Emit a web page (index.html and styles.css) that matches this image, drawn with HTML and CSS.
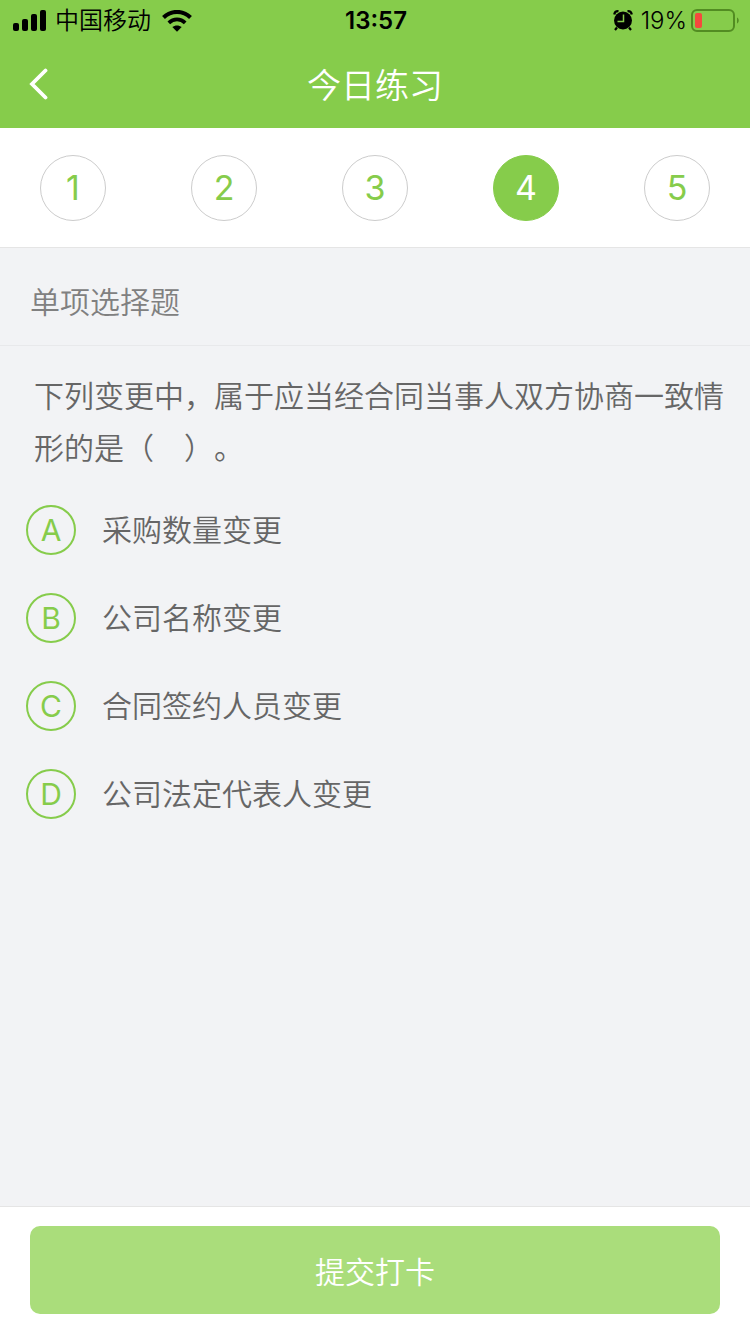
FILE: index.html
```
<!DOCTYPE html>
<html lang="zh-CN">
<head>
    <meta charset="UTF-8">
    <meta name="viewport" content="width=device-width, initial-scale=1.0">
    <title>今日练习</title>
    <link rel="stylesheet" href="styles.css">
</head>
<body>
    <header class="header">
        <div class="status-bar">
            <div class="status-left">
                <svg width="34" height="22" viewBox="0 0 34 22" aria-hidden="true">
                    <rect x="0" y="13" width="6" height="8" rx="2"/>
                    <rect x="9" y="9" width="6" height="12" rx="2"/>
                    <rect x="18" y="4" width="6" height="17" rx="2"/>
                    <rect x="27" y="0" width="6" height="21" rx="2"/>
                </svg>
                <span class="carrier">中国移动</span>
                <svg width="30" height="22" viewBox="0 0 30 22" aria-hidden="true">
                    <path d="M1.5 7.5C9 0 21 0 28.500 7.500" fill="none" stroke="#000" stroke-width="4"/>
                    <path d="M6.800 12.800C11.500 8.300 18.500 8.300 23.200 12.800" fill="none" stroke="#000" stroke-width="3.800"/>
                    <path d="M10.300 17.100C13 14.800 17 14.800 19.700 17.100L15 21.800Z"/>
                </svg>
            </div>
            <span class="clock">13:57</span>
            <div class="status-right">
                <svg width="20" height="22" viewBox="0 0 20 22" aria-hidden="true">
                    <circle cx="10" cy="10.500" r="9"/>
                    <path d="M1.200 4.500A4 4 0 0 1 5.500 1.200M18.800 4.500A4 4 0 0 0 14.500 1.200M4 17.500L2 20M16 17.500L18 20" fill="none" stroke="#000" stroke-width="2.200"/>
                    <path d="M10.500 4.500V11.500H4.500" fill="none" stroke="#86cc4b" stroke-width="1.500"/>
                </svg>
                <span class="percent">19%</span>
                <svg width="48" height="24" viewBox="0 0 48 24" aria-hidden="true">
                    <rect x="1" y="1" width="42" height="21" rx="5" fill="none" stroke="#528c22" stroke-width="2"/>
                    <rect x="4" y="4" width="7" height="15" rx="2" fill="#f5493d"/>
                    <path d="M46 8.500C48.300 9.500 48.300 13.500 46 14.500Z" fill="#528c22"/>
                </svg>
            </div>
        </div>
        <div class="title-bar">
            <button class="back-button" type="button" aria-label="返回">
                <svg width="20" height="32" viewBox="0 0 20 32" aria-hidden="true">
                    <path d="M16.500 2.500L3 16L16.500 29.500" fill="none" stroke="#fff" stroke-width="3.800" stroke-linecap="round"/>
                </svg>
            </button>
            <h1>今日练习</h1>
        </div>
    </header>

    <nav class="steps" aria-label="题目">
        <button class="step" type="button">1</button>
        <button class="step" type="button">2</button>
        <button class="step" type="button">3</button>
        <button class="step active" type="button" aria-current="step">4</button>
        <button class="step" type="button">5</button>
    </nav>

    <main class="content">
        <h2>单项选择题</h2>
        <form id="quiz">
            <p class="question" id="question">下列变更中，属于应当经合同当事人双方协商一致情形的是（　）。</p>
            <div class="options" role="radiogroup" aria-labelledby="question">
                <label class="option">
                    <span class="mark"><input type="radio" name="answer" value="A"><span>A</span></span>
                    采购数量变更
                </label>
                <label class="option">
                    <span class="mark"><input type="radio" name="answer" value="B"><span>B</span></span>
                    公司名称变更
                </label>
                <label class="option">
                    <span class="mark"><input type="radio" name="answer" value="C"><span>C</span></span>
                    合同签约人员变更
                </label>
                <label class="option">
                    <span class="mark"><input type="radio" name="answer" value="D"><span>D</span></span>
                    公司法定代表人变更
                </label>
            </div>
        </form>
    </main>

    <footer class="footer">
        <button class="submit-button" type="submit" form="quiz">提交打卡</button>
    </footer>
</body>
</html>
```

FILE: styles.css
```
* {
    margin: 0;
    padding: 0;
    box-sizing: border-box;
}

body {
    font-family: Inter, "Noto Sans CJK SC", sans-serif;
    font-size: 30px;
    font-weight: 350;
    text-spacing-trim: space-all;
    min-height: 100vh;
    display: flex;
    flex-direction: column;
    background: #f2f3f5;
    color: #666;
}

button {
    font-family: inherit;
    font-weight: inherit;
    border: none;
    background: none;
    cursor: pointer;
}

svg {
    display: block;
    flex-shrink: 0;
}

/* Header */
.header {
    background: #86cc4b;
}

.status-bar {
    display: grid;
    grid-template-columns: 1fr auto 1fr;
    align-items: center;
    height: 40px;
    padding: 0 11px 0 13px;
    color: #000;
    font-size: 24px;
    line-height: 42px;
}

.status-left,
.status-right {
    display: flex;
    align-items: center;
}

.status-left {
    gap: 8px;
}

.carrier {
    margin-right: 3px;
}

.status-right {
    justify-content: flex-end;
    gap: 4px;
}

.percent {
    margin-left: 4px;
}

.clock {
    font-weight: 600;
}

.title-bar {
    display: grid;
    grid-template-columns: 60px 1fr 60px;
    align-items: center;
    height: 88px;
    padding: 0 15px;
    color: #fff;
}

.back-button {
    display: flex;
    align-items: center;
    height: 60px;
    padding-left: 14px;
}

h1 {
    padding-top: 4px;
    font-size: 34px;
    font-weight: 350;
    line-height: 48px;
    text-align: center;
}

/* Question numbers */
.steps {
    display: flex;
    justify-content: space-between;
    align-items: center;
    height: 120px;
    padding: 0 40px;
    background: #fff;
    border-bottom: 1px solid #e5e5e5;
}

.step {
    width: 66px;
    height: 66px;
    border: 1px solid #ccc;
    border-radius: 50%;
    color: #86cc4b;
    font-size: 34px;
    font-weight: 400;
}

.step.active {
    background: #86cc4b;
    border-color: #86cc4b;
    color: #fff;
}

/* Question */
.content {
    flex: 1;
}

h2 {
    padding: 30px 30px 19px;
    border-bottom: 1px solid #e8e9eb;
    color: #808080;
    font-size: 30px;
    font-weight: 350;
    line-height: 48px;
}

.question {
    padding: 24px 26px 26px 34px;
    line-height: 52px;
}

.options {
    display: flex;
    flex-direction: column;
    padding: 0 26px;
    gap: 28px;
}

.option {
    display: flex;
    align-items: center;
    gap: 26px;
    min-height: 60px;
    line-height: 48px;
    cursor: pointer;
}

.mark {
    display: grid;
    place-items: center;
    color: #86cc4b;
    font-weight: 400;
}

.mark input,
.mark span {
    grid-area: 1 / 1;
}

.mark input {
    appearance: none;
    width: 50px;
    height: 50px;
    border: 2px solid #86cc4b;
    border-radius: 50%;
    cursor: pointer;
}

.mark input:checked {
    background: #86cc4b;
}

.mark input:checked + span {
    color: #fff;
}

/* Footer */
.footer {
    padding: 19px 30px 20px;
    background: #fff;
    border-top: 1px solid #e5e5e5;
}

.submit-button {
    display: block;
    width: 100%;
    height: 88px;
    border-radius: 10px;
    background: #aadd7b;
    color: #fff;
    font-size: 30px;
}
```
